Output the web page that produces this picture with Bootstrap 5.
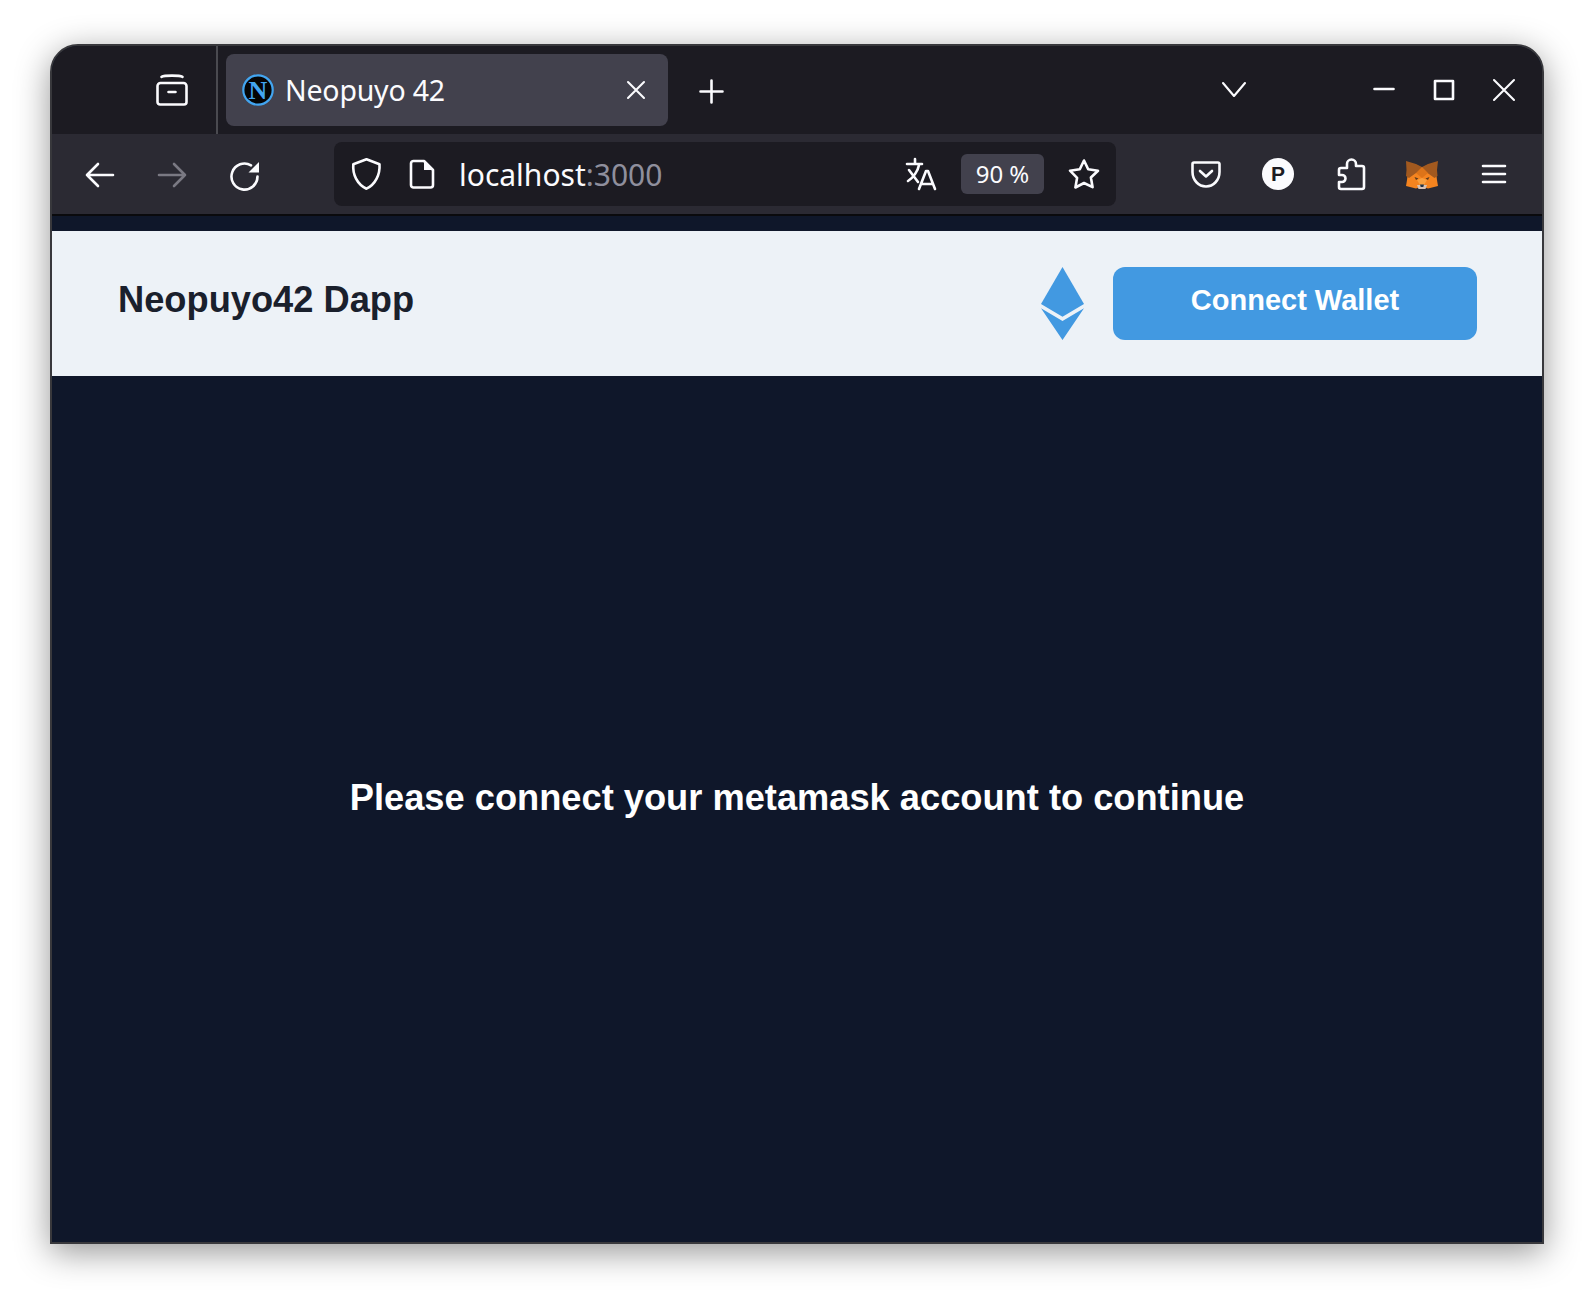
<!doctype html>
<html lang="en"><head><meta charset="utf-8"><title>Neopuyo 42</title>
<link rel="stylesheet" href="https://cdn.jsdelivr.net/npm/bootstrap@5.3.0/dist/css/bootstrap.min.css">
<style>
html,body{height:100%;background:#fff;overflow:hidden}
.win{width:1494px;height:1200px;margin:44px 0 0 50px;border:2px solid #38383c;border-radius:28px 28px 0 0;box-shadow:0 8px 34px rgba(0,0,0,.42);background:#0f172a;overflow:hidden}
.tabstrip{height:88px;background:#1c1b22;padding-right:22px;font-family:"Noto Sans",sans-serif}
.tool{height:80px;background:#2b2a33;padding-left:32px;font-family:"Noto Sans",sans-serif}
.shade{height:2px;background:#0a0a0d}
.ico{width:32px;height:32px;flex:none;display:block;overflow:visible;fill:none;stroke:#fbfbfe;stroke-width:2.6;stroke-linecap:round;stroke-linejoin:round}
.ico-thin{stroke-width:2.1}
.sep{width:2px;background:#4a4a50;margin:0 8px 0 28px}
.ftab{width:442px;height:72px;background:#42414d;border-radius:8px;color:#fbfbfe;font-size:28.5px;padding:0 16px;margin-right:27px}
.ftab span{margin-left:11px;letter-spacing:-.2px}
.urlbar{width:782px;height:64px;background:#1c1b22;border-radius:8px;margin:0 74px 0 72px;padding:0 16px;color:#fbfbfe;font-size:30px}
.urlbar .dim{color:#8f8f9d}
.zoompill{width:83px;height:40px;background:#42414d;border-radius:6px;font-size:24px;margin:0 24px 0 23px}
.pro{width:32px;height:32px;border-radius:50%;background:#fbfbfe;color:#1c1b22;font:700 21px "Liberation Sans",sans-serif;flex:none}
.apphead{height:145px;margin-top:15px;background:#edf2f7;padding:0 65px 0 66px;font-family:"Liberation Sans",Arial,sans-serif}
.appname{font-size:36.25px;font-weight:700;color:#1a202c;margin-top:-7px}
.ethbtn{width:43px;height:73px;flex:none;margin-right:29px}
.connect{width:364px;height:73px;background:#4299e1;border:0;border-radius:12px;color:#fff;font-size:29px;font-weight:700;padding:0 0 5px}
.connect:hover{background:#4299e1;color:#fff}
.mainpane{height:865px;padding-top:400px;font-family:"Liberation Sans",Arial,sans-serif;color:#fff;font-size:36.25px;font-weight:700;line-height:1.2}
</style></head><body>
<div class="win d-flex flex-column">
 <div class="tabstrip d-flex align-items-center">
  <svg class="ico" style="margin-left:104px" viewBox="0 0 32 32"><path d="M5.500 2.800c3-1.600 18-1.600 21 0M1.500 12a3 3 0 0 1 3-3h23a3 3 0 0 1 3 3v16a2.500 2.500 0 0 1-2.500 2.500H4A2.500 2.500 0 0 1 1.500 28zM12.500 18h7"/></svg>
  <div class="sep align-self-stretch"></div>
  <div class="ftab d-flex align-items-center">
   <svg width="32" height="32" viewBox="0 0 32 32" class="flex-none"><circle cx="16" cy="16" r="14.700" fill="#050505" stroke="#42a5f0" stroke-width="2.200"/><text x="16" y="25" text-anchor="middle" font-family="Liberation Serif" font-weight="700" font-size="26" fill="#42a5f0">N</text></svg>
   <span>Neopuyo 42</span>
   <svg class="ico ico-thin ms-auto" style="margin-right:-1px" viewBox="0 0 32 32"><path d="M7 8l16 16M23 8L7 24"/></svg>
  </div>
  <svg class="ico" viewBox="0 0 32 32"><path d="M16.500 6.500v22M5.500 17.500h22"/></svg>
  <svg class="ico ico-thin ms-auto" viewBox="0 0 32 32"><path d="M5 9l11 13 11-13"/></svg>
  <svg class="ico" style="margin-left:118px" viewBox="0 0 32 32"><path d="M6.500 15h19"/></svg>
  <svg class="ico" style="margin-left:28px" viewBox="0 0 32 32"><path stroke-linecap="square" d="M7 7h18v18H7z"/></svg>
  <svg class="ico ico-thin" style="margin-left:28px" viewBox="0 0 32 32"><path d="M6 6l20 20M26 6L6 26"/></svg>
 </div>
 <div class="tool d-flex align-items-center">
  <svg class="ico" viewBox="0 0 32 32"><path d="M3 17h26M14 6L3 17l11 11"/></svg>
  <svg class="ico" style="margin-left:40px;stroke:#7a7983" viewBox="0 0 32 32"><path d="M3 17h26M18 6l11 11-11 11"/></svg>
  <svg class="ico" style="margin-left:42px" viewBox="0 0 32 32"><path d="M27.500 18.500A13 13 0 1 1 21 7.300"/><path fill="#fbfbfe" stroke="none" d="M29 4v10.500H18.500z"/></svg>
  <div class="urlbar d-flex align-items-center">
   <svg class="ico" viewBox="0 0 32 32"><path d="M16.500 1.300l13 5c.7 10-4 20-13 24.400C7 26.300 2.500 16.300 3.300 6.300z"/></svg>
   <svg class="ico" style="margin-left:24px" viewBox="0 0 32 32"><path d="M7.500 3H18l9 9v15a2.500 2.500 0 0 1-2.500 2.500h-17A2.500 2.500 0 0 1 5 27V5.500A2.500 2.500 0 0 1 7.500 3z"/><path fill="#fbfbfe" stroke="none" d="M18 3l9 9h-9z"/></svg>
   <span style="margin-left:21px">localhost<span class="dim">:3000</span></span>
   <svg class="ico ms-auto" viewBox="0 0 32 32"><path d="M9 1v4M1 6h15M3 12l9 12M13 7c-1 6-6 13-11 16M13 31l7-18 2 0 7 18M15.500 26h11"/></svg>
   <div class="zoompill d-flex align-items-center justify-content-center">90 %</div>
   <svg class="ico" viewBox="0 0 32 32"><path d="M16 2.500l4.200 8.800 9.800 1.400-7.100 6.800 1.700 9.700L16 25l-8.600 4.500 1.700-9.700L2 12.700l9.800-1.400z"/></svg>
  </div>
  <svg class="ico" viewBox="0 0 32 32"><path d="M4 4.500h24A1.500 1.500 0 0 1 29.500 6v8c0 8-6 14.500-13.500 14.500S2.500 22 2.500 14V6A1.500 1.500 0 0 1 4 4.500zM10 13l6 5.500 6-5.500"/></svg>
  <div class="pro d-flex align-items-center justify-content-center" style="margin-left:40px">P</div>
  <svg class="ico" style="margin-left:43px" viewBox="0 0 32 32"><path d="M4 31a2 2 0 0 1-2-2v-5h3a3.500 3.500 0 0 0 0-7H2v-5a2 2 0 0 1 2-2h6V6a4.500 4.500 0 0 1 9 0v2h6a2 2 0 0 1 2 2v19a2 2 0 0 1-2 2z"/></svg>
  <svg width="32" height="29" viewBox="0 0 32 29" style="margin-left:37px;flex:none">
   <path fill="#f5841f" d="M2 12h28l1 8 1 6-10 2.500-3-1h-6l-3 1L0 26l1-6z"/>
   <path fill="#a2591f" d="M0 1l10 3 6 3 6-3 10-3-1 9 .5 6-3 2-7-5H10l-7 5-3-2 .5-6z"/>
   <path fill="#dd7419" d="M16 7l6 6-6 5-6-5z"/>
   <path fill="#f9a03f" d="M16 18l-5 2 3 5h4l3-5z"/>
   <path fill="#5a3a1e" d="M8.500 17l4 1.500-2.500 1.500zM23.500 17l-4 1.500 2.500 1.500z"/>
   <path fill="#d7c1b3" d="M11 25h10l-1.500 4h-7z"/><path fill="#233447" d="M14 24.500h4l-.7 2.500h-2.600z"/>
  </svg>
  <svg class="ico" style="margin-left:40px" viewBox="0 0 32 32"><path d="M5 8h22M5 16h22M5 24h22"/></svg>
 </div>
 <div class="shade"></div>
 <div class="apphead d-flex align-items-center">
  <div class="appname me-auto">Neopuyo42 Dapp</div>
  <svg class="ethbtn" viewBox="0 0 43 73"><path fill="#4299e1" d="M21.500 0L43 37 21.500 49.700 0 37z"/><path fill="#4299e1" d="M0 41.300L21.500 54 43 41.300 21.500 73z"/></svg>
  <button class="btn connect" type="button">Connect Wallet</button>
 </div>
 <div class="mainpane text-center">Please connect your metamask account to continue</div>
</div>
<script src="https://cdn.jsdelivr.net/npm/bootstrap@5.3.0/dist/js/bootstrap.bundle.min.js"></script>
</body></html>
